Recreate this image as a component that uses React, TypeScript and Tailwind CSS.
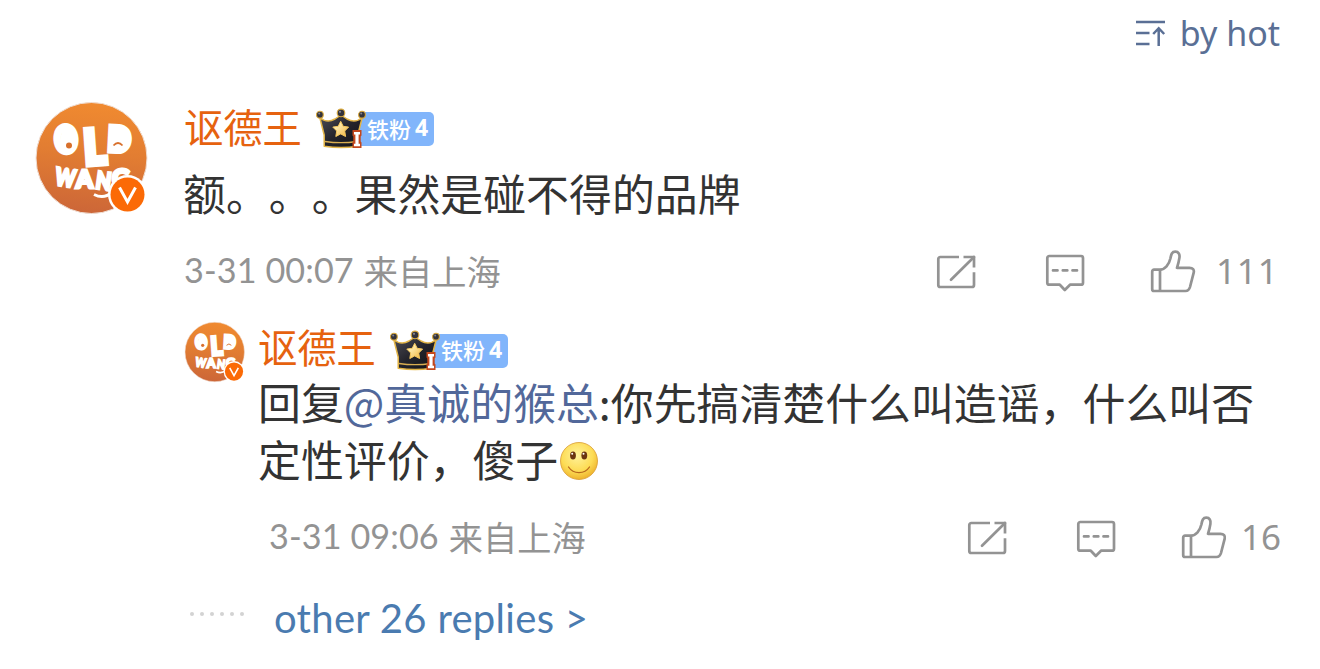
import { useId } from "react";

const comment = {
  name: "讴德王",
  body: "额。。。果然是碰不得的品牌",
  date: "3-31 00:07",
  place: "来自上海",
  likes: 111,
};

const reply = {
  name: "讴德王",
  mention: "@真诚的猴总",
  lines: [":你先搞清楚什么叫造谣，什么叫否", "定性评价，傻子"],
  date: "3-31 09:06",
  place: "来自上海",
  likes: 16,
};

function SortIcon() {
  return (
    <svg className="h-8 w-8 shrink-0" viewBox="0 0 32 32" fill="none" stroke="currentColor" strokeWidth="2.5">
      <path d="M1 4h29M1 15h13.5M1 26h13.5M23.7 28V10.5M18.2 16l5.5-5.8 5.5 5.8" />
    </svg>
  );
}

function ShareIcon() {
  return (
    <svg
      className="h-10 w-10 shrink-0"
      viewBox="0 0 40 40"
      fill="none"
      stroke="currentColor"
      strokeWidth="2.7"
      strokeLinejoin="round"
    >
      <path d="M23 5H4.300a2 2 0 0 0-2 2v26a2 2 0 0 0 2 2H36a2 2 0 0 0 2-2V20.300" />
      <path d="M27.500 5H38v10.500" />
      <path d="M38 5 15 27.800" strokeLinecap="round" />
    </svg>
  );
}

function CommentIcon() {
  return (
    <svg
      className="h-10 w-10 shrink-0"
      viewBox="0 0 40 40"
      fill="none"
      stroke="currentColor"
      strokeWidth="2.7"
      strokeLinejoin="round"
    >
      <path d="M4.300 4H36a2 2 0 0 1 2 2v24.700a2 2 0 0 1-2 2H25L19.800 38l-5-5.300H4.300a2 2 0 0 1-2-2V6a2 2 0 0 1 2-2Z" />
      <path d="M8 18.400h4.500M17.800 18.400h4.500M27.500 18.400h4.500" strokeLinecap="round" />
    </svg>
  );
}

function LikeIcon() {
  return (
    <svg
      className="h-12 w-[46px] shrink-0"
      viewBox="0 0 46 48"
      fill="none"
      stroke="currentColor"
      strokeWidth="2.7"
      strokeLinejoin="round"
    >
      <path d="M4 21.700h6c5-.2 9-5 10.400-11.200.8-4.200 1.500-6.800 4.900-6.800 3.300 0 4.700 2.800 4.100 6.200-.5 3.600-1.400 6.800-2.400 9.900h12.500c3.300 0 4.900 2 4.200 4.800L40 39c-.8 2.800-2 4-4.500 4H4a1.800 1.800 0 0 1-1.800-1.800V23.500A1.800 1.800 0 0 1 4 21.700Z" />
      <path d="M10 21.700V43" />
    </svg>
  );
}

function Crown() {
  const id = useId();
  return (
    <svg className="relative h-[42px] w-[50px] shrink-0" viewBox="0 0 50 42">
      <defs>
        <linearGradient id={id + "body"} x1="0" y1="0" x2="1" y2="1">
          <stop offset="0" stopColor="#4d4d57" />
          <stop offset=".5" stopColor="#24242b" />
          <stop offset="1" stopColor="#121217" />
        </linearGradient>
        <linearGradient id={id + "star"} x1="0" y1="0" x2="1" y2="1">
          <stop offset=".2" stopColor="#fff3bd" />
          <stop offset="1" stopColor="#f2b23a" />
        </linearGradient>
      </defs>
      <path
        d="M3.800 9.500c4.500 4 10 4.500 15.200 1.500L25 7l6 4c5.200 3 10.700 2.500 15.200-1.500L41.800 27v11.300c-10 1.500-23.500 1.500-33.600 0V27Z"
        fill={`url(#${id}body)`}
        stroke="#e3b547"
        strokeWidth="1.5"
        strokeLinejoin="round"
      />
      <path d="M9 33.500c10 1.500 22 1.500 32 0" fill="none" stroke="#d9ae51" strokeWidth="1.300" />
      <g fill="#33333b" stroke="#d9a93d" strokeWidth="1.100">
        <circle cx="3.900" cy="6.700" r="3.400" />
        <circle cx="25" cy="4.900" r="3.800" />
        <circle cx="46" cy="6.700" r="3.400" />
      </g>
      <g fill="#85858f">
        <circle cx="3.200" cy="5.600" r="1" />
        <circle cx="24" cy="3.800" r="1.100" />
        <circle cx="45.200" cy="5.600" r="1" />
      </g>
      <path
        d="m24.700 13.300 2.500 5 5.400.8-3.900 3.900.9 5.500-4.900-2.600-4.900 2.600.9-5.500-3.900-3.900 5.400-.8Z"
        fill={`url(#${id}star)`}
        stroke="#f5c75c"
        strokeWidth="1"
      />
      <path d="M36.500 22h9v5.500l-.8 1v5l.8 1V40h-9v-5.500l.8-1v-5l-.8-1Z" fill="#c4471c" />
      <path d="M38 24h6v2.500h-1.400v9.300H44v2.500h-6v-2.500h1.400v-9.300H38Z" fill="#fff" />
    </svg>
  );
}

function FanBadge() {
  return (
    <span className="flex items-center">
      <Crown />
      <span className="-ml-[6px] flex h-[34px] w-[74px] items-center rounded-r-[5px] bg-[#81b5fb] pb-[3px] pl-[7px] text-[22px] leading-none font-medium text-white">
        铁粉
        <span className="ml-1 font-['Noto_Sans'] text-[23px] font-bold">4</span>
      </span>
    </span>
  );
}

function Avatar({ className }: { className: string }) {
  const id = useId();
  return (
    <svg className={"shrink-0 " + className} viewBox="0 0 112 112" overflow="visible">
      <defs>
        <linearGradient id={id} x1=".5" y1="0" x2=".4" y2="1">
          <stop offset="0" stopColor="#f08a30" />
          <stop offset=".45" stopColor="#e27d32" />
          <stop offset="1" stopColor="#cc6638" />
        </linearGradient>
      </defs>
      <circle cx="55.500" cy="56" r="55.500" fill={`url(#${id})`} stroke="#f0dfd5" strokeWidth="1" />
      <g fill="#fff" stroke="#fff" fontFamily="Lato, sans-serif" fontWeight="900">
        <text x="18" y="51" fontSize="38" strokeWidth="4" textLength="24" lengthAdjust="spacingAndGlyphs" transform="rotate(-4 30 38)">
          O
        </text>
        <text x="48" y="62" fontSize="48" strokeWidth="6" strokeLinejoin="miter" textLength="22" lengthAdjust="spacingAndGlyphs" transform="rotate(-4 58 48)">
          L
        </text>
        <text x="71" y="50" fontSize="36" strokeWidth="4" strokeLinejoin="miter" textLength="24" lengthAdjust="spacingAndGlyphs" transform="rotate(3 82 38)">
          D
        </text>
      </g>
      <ellipse cx="31" cy="38" rx="7" ry="11" fill="#fff" />
      <circle cx="33" cy="43.500" r="3" fill="#d8702c" />
      <ellipse cx="82" cy="38" rx="7" ry="10" fill="#fff" />
      <path d="M77.500 43.500q4.500-5 9 0" fill="none" stroke="#d8702c" strokeWidth="1.800" />
      <g fill="#fff" stroke="#fff" strokeWidth="3" strokeLinejoin="miter" fontFamily="Lato, sans-serif" fontWeight="900">
        <text x="19" y="84" fontSize="24" textLength="20" lengthAdjust="spacingAndGlyphs" transform="rotate(9 28 78)">
          W
        </text>
        <text x="40" y="86" fontSize="24" textLength="17" lengthAdjust="spacingAndGlyphs">
          A
        </text>
        <text x="60" y="87" fontSize="24" textLength="15" lengthAdjust="spacingAndGlyphs" transform="rotate(8 65 79)">
          N
        </text>
        <text x="76" y="86" fontSize="26" textLength="18" lengthAdjust="spacingAndGlyphs">
          G
        </text>
      </g>
      <path d="M58 92.500c6 3 12 3 18-2" fill="none" stroke="#fff" strokeWidth="3" />
      <circle cx="91.500" cy="92.500" r="19.500" fill="#fff" />
      <circle cx="91.500" cy="92.500" r="17" fill="#fb6a06" />
      <path d="m83.500 85.500 8 14.500 8-14.500" fill="none" stroke="#fff" strokeWidth="3" />
    </svg>
  );
}

function Smile() {
  const id = useId();
  return (
    <svg className="h-10 w-10 shrink-0" viewBox="0 0 40 40">
      <defs>
        <radialGradient id={id} cx=".45" cy=".35" r=".65">
          <stop offset="0" stopColor="#fff29b" />
          <stop offset=".65" stopColor="#fddc55" />
          <stop offset="1" stopColor="#eeb32d" />
        </radialGradient>
      </defs>
      <circle cx="20" cy="20" r="18.500" fill={`url(#${id})`} stroke="#d99b2e" strokeWidth=".8" />
      <ellipse cx="14" cy="14.500" rx="2.900" ry="4" fill="#6b3511" />
      <ellipse cx="25.300" cy="14.500" rx="2.900" ry="4" fill="#6b3511" />
      <circle cx="13.200" cy="12.800" r="1" fill="#fff" />
      <circle cx="24.500" cy="12.800" r="1" fill="#fff" />
      <path d="M9.500 26c5 7.500 16 7.500 21 0" fill="none" stroke="#b8691c" strokeWidth="1.300" strokeLinecap="round" />
    </svg>
  );
}

function Posted({ date, place }: { date: string; place: string }) {
  return (
    <p className="flex items-center gap-[10px] pb-1 text-[34.2px] leading-none">
      <span className="font-['Lato'] tracking-[0.1px]">{date}</span>
      <span>{place}</span>
    </p>
  );
}

function Actions({ likes, countClass }: { likes: number; countClass: string }) {
  return (
    <div className="flex items-center">
      <ShareIcon />
      <span className="ml-[69px] flex">
        <CommentIcon />
      </span>
      <span className="ml-[65px] flex">
        <LikeIcon />
      </span>
      <span className={"pb-[3px] font-['Noto_Sans'] text-[35px] leading-none " + countClass}>{likes}</span>
    </div>
  );
}

export default function App() {
  return (
    <main className="h-[669px] w-[1320px] overflow-hidden bg-white pr-10 font-['Noto_Sans_CJK_SC',sans-serif] whitespace-nowrap text-[#333] [text-spacing-trim:space-all]">
      <header className="flex h-[68px] items-center justify-end gap-[13px] text-[#5a6f95]">
        <SortIcon />
        <span className="pb-[3px] font-['Noto_Sans'] text-[34px] leading-none">by hot</span>
      </header>

      <article className="flex pt-[34px] pl-9">
        <Avatar className="h-28 w-28" />
        <div className="ml-9 flex-1">
          <div className="flex h-[54px] items-center">
            <h2 className="w-[132px] pb-[6px] text-[39.3px] leading-none text-[#e6620f]">{comment.name}</h2>
            <FanBadge />
          </div>
          <p className="-ml-px flex h-20 items-center pb-[7px] text-[42.9px] leading-none">{comment.body}</p>
          <div className="flex h-[72px] items-center justify-between text-[#939393]">
            <Posted date={comment.date} place={comment.place} />
            <Actions likes={comment.likes} countClass="ml-5 w-16 tracking-[0.8px]" />
          </div>

          <section className="mt-[14px] flex">
            <Avatar className="ml-px h-[60px] w-[60px]" />
            <div className="ml-[13px] flex-1">
              <div className="flex h-[54px] items-center pt-[3px]">
                <h3 className="w-[132px] pb-[9px] text-[39.3px] leading-none text-[#e6620f]">{reply.name}</h3>
                <FanBadge />
              </div>
              <p className="-mt-[3px] text-[42.9px] leading-[57px]">
                回复<span className="text-[#52689a]">{reply.mention}</span>
                {reply.lines[0]}
              </p>
              <p className="mb-[3px] flex items-center gap-px text-[42.9px] leading-[57px]">
                {reply.lines[1]}
                <span className="mt-1">
                  <Smile />
                </span>
              </p>
              <div className="flex h-24 items-center justify-between pl-[11px] text-[#939393]">
                <Posted date={reply.date} place={reply.place} />
                <Actions likes={reply.likes} countClass="ml-[14px] w-[39px]" />
              </div>
            </div>
          </section>

          <div className="flex h-16 items-center">
            <span className="ml-[6px] flex w-[84px] gap-[6px]">
              {[0, 1, 2, 3, 4, 5].map((dot) => (
                <i key={dot} className="mb-2 h-1 w-1 rounded-full bg-[#d3d3d3]" />
              ))}
            </span>
            <a className="pb-px font-['Lato'] text-[40px] leading-none tracking-[0.3px] text-[#4a7bb0]">
              other 26 replies &gt;
            </a>
          </div>
        </div>
      </article>
    </main>
  );
}
